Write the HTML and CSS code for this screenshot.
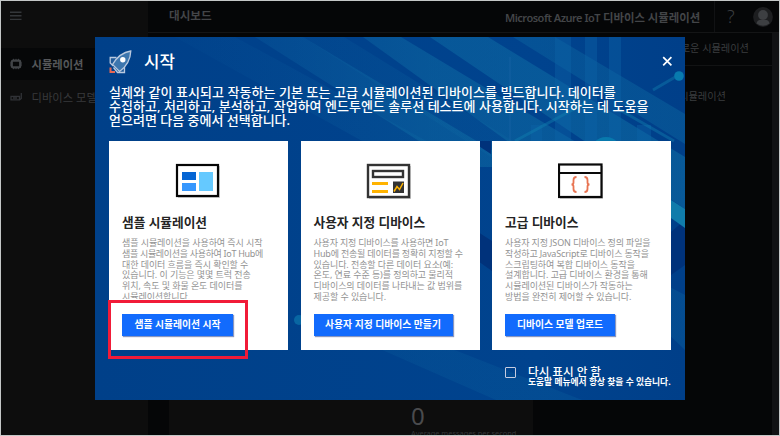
FILE: index.html
```html
<!DOCTYPE html>
<html lang="ko">
<head>
<meta charset="utf-8">
<title>Microsoft Azure IoT 디바이스 시뮬레이션</title>
<link rel="stylesheet" href="styles.css">
</head>
<body>
<div class="app">
  <aside class="sidebar">
    <div class="menu"><svg width="12" height="12" viewBox="0 0 12 12"><path d="M0 2.2h11.500M0 5.800h11.500M0 9.400h11.500" stroke="#34373a" stroke-width="1.400"/></svg></div>
    <nav>
      <a class="nav-item active"><svg width="12" height="12" viewBox="0 0 12 12" fill="none" stroke="#414447"><rect x="1.800" y="2.600" width="8.400" height="6.800" rx="1.200" stroke-width="2.200"/><path d="M3.500.800v2M6 .800v2M8.500.800v2M3.500 9.200v2M6 9.200v2M8.500 9.200v2M0 5h2M0 7h2M10 5h2M10 7h2" stroke-width=".9"/></svg><span>시뮬레이션</span></a>
      <a class="nav-item model"><svg width="12" height="12" viewBox="0 0 12 12" fill="none" stroke="#303236"><path d="M1 5.300h8.500v3.500H1zM11.300 2v5.500L9.500 9M3 7h4" stroke-width="1.300"/></svg><span>디바이스 모델</span></a>
    </nav>
  </aside>
  <div class="main">
    <header class="topbar">
      <h1>대시보드</h1>
      <div class="product"><span class="latin">Microsoft Azure IoT</span> 디바이스 시뮬레이션</div>
      <div class="help">?</div>
      <svg class="avatar" width="20" height="20" viewBox="0 0 20 20"><circle cx="10" cy="10" r="9.900" fill="#1d1e20"/><circle cx="10" cy="8" r="4.900" fill="#3d3f42"/><path d="M3.500 16.500Q4 13 8 12.700h4q4 .3 4.500 3.800Q10 21 3.500 16.500z" fill="#3d3f42"/></svg>
    </header>
    <div class="content">
      <div class="board">
        <div class="toolbar">새로운 시뮬레이션</div>
        <div class="caption">시뮬레이션</div>
        <section class="metric"><div class="value">0</div><div class="label">Average messages per second</div></section>
      </div>
      <div class="scroll"></div>
    </div>
  </div>

  <div class="modal">
    <svg class="pattern" width="590" height="363" viewBox="0 0 590 363">
      <defs>
        <linearGradient id="fade" gradientUnits="userSpaceOnUse" x1="80" x2="590" y1="0" y2="0"><stop offset="0" stop-color="#1068a8" stop-opacity=".1"/><stop offset=".5" stop-color="#1070a6" stop-opacity=".45"/><stop offset="1" stop-color="#0d6aa2" stop-opacity=".6"/></linearGradient>
        <linearGradient id="deep" x1="0" y1="0" x2="1" y2="0"><stop offset="0" stop-color="#004089"/><stop offset=".75" stop-color="#00438e"/><stop offset="1" stop-color="#003f89"/></linearGradient>
      </defs>
      <rect width="590" height="363" fill="url(#deep)"/>
      <g fill="url(#fade)">
        <path d="M80 0h60l230 125h-65z" opacity=".5"/>
        <path d="M160 0h48l217 130h-60z"/>
        <path d="M208 0h41l195 120h-48z" opacity=".4"/>
        <path d="M268 0h38l220 132h-75z"/>
        <path d="M335 0h58l197 120v52z"/>
        <path d="M418 0h42l130 77v30z" opacity=".7"/>
        <path d="M285 312h72l130 51h-86z" opacity=".4"/>
        <path d="M565 245l25 13v55l-25-24z" opacity=".5"/>
      </g>
      <path d="M376 104l20 13v-13zM576 195l14-12v45l-14 10zM383 195l14 9v30l-14-10z" fill="#00327b"/>
      <path d="M460 0h16v104h-16zM490 0h12v104h-12zM514 0h12v104h-12zM436 88h11v16h-11zM542 88h14v16h-14z" fill="#0d65a8" opacity=".4"/>
      <path d="M415 20v84" stroke="#1762a5" stroke-width="2" opacity=".4"/>
      <path d="M420 104l72-39M558 53l24-14M525 73l54 31" stroke="#1284b1" stroke-width="3" fill="none" opacity=".4"/>
      <circle cx="584" cy="39" r="4.800" fill="#087bae"/>
      <circle cx="511" cy="116" r="16" fill="#0879ad"/>
      <path d="M576 163l14 9v19l-14-10z" fill="#107cab"/>
      <circle cx="204" cy="283" r="5" fill="#0c76ad" opacity=".7"/>
    </svg>
    <div class="modal-head">
      <svg class="rocket" width="24" height="26" viewBox="0 0 24 26" fill="none" stroke="#b9c9df"><path d="M7.500 8.500H1.200V14l3 3M15.500 17.500v6h-7l-4-5" stroke-width="1.300" fill="#205a9a"/><path d="M21.800 2C15 3 8.500 7 3.500 15.500l7 7C17.500 17.500 21.500 10 21.800 2z" fill="#3d76ae" stroke-width="1.300"/><circle cx="13.800" cy="10.800" r="2.700" fill="#fff" stroke="none"/><path d="M1.500 18.500V23H6" stroke="#e76854" stroke-width="2"/></svg>
      <h2>시작</h2>
      <svg class="close" width="11" height="11" viewBox="0 0 11 11"><path d="M1.200 1.200l8.200 8.200M9.400 1.200L1.200 9.400" stroke="#fff" stroke-width="1.700"/></svg>
    </div>
    <p class="intro"><span class="i1">실제와 같이 표시되고 작동하는 기본 또는 고급 시뮬레이션된 디바이스를 빌드합니다. 데이터를</span><span class="i2">수집하고, 처리하고, 분석하고, 작업하여 엔드투엔드 솔루션 테스트에 사용합니다. 시작하는 데 도움을</span><span class="i3">얻으려면 다음 중에서 선택합니다.</span></p>
    <div class="cards">
      <article class="card">
        <svg class="art" width="46" height="36" viewBox="0 0 46 36"><path d="M3 3h42v32H3z" fill="#ccc"/><rect x="2" y="2" width="41" height="31" fill="#fff" stroke="#050505" stroke-width="2.200"/><path d="M7 9h14v8H7z" fill="#0565d3"/><path d="M7 20h14v8H7z" fill="#3697fd"/><path d="M24 9h14v19H24z" fill="#65c9ff"/></svg>
        <h3>샘플 시뮬레이션</h3>
        <p class="clipped"><span>샘플 시뮬레이션을 사용하여 즉시 시작</span><span class="t4">샘플 시뮬레이션을 사용하여 IoT Hub에</span><span>대한 데이터 흐름을 즉시 확인할 수</span><span>있습니다. 이 기능은 몇몇 트럭 전송</span><span>위치, 속도 및 화물 온도 데이터를</span><span>시뮬레이션합니다.</span></p>
        <button class="b1">샘플 시뮬레이션 시작</button>
        <div class="highlight"></div>
      </article>
      <article class="card">
        <svg class="art" width="46" height="36" viewBox="0 0 46 36"><path d="M3 3h42v33H3z" fill="#ccc"/><rect x="2" y="2" width="41" height="32" fill="#fff" stroke="#333" stroke-width="2.400"/><rect x="7" y="8" width="30" height="6" fill="#fff" stroke="#333" stroke-width="2.400"/><path d="M6 20.500h16M6 28.500h16" stroke="#ffb300" stroke-width="3"/><path d="M27 18.500h11v11.500H27z" fill="#333"/><path d="M28 28.500l3-5 2.500 3L37 20" fill="none" stroke="#ffb300" stroke-width="1.500"/></svg>
        <h3>사용자 지정 디바이스</h3>
        <p><span class="t2">사용자 지정 디바이스를 사용하면 IoT</span><span class="t2">Hub에 전송될 데이터를 정확히 지정할 수</span><span>있습니다. 전송할 다른 데이터 요소(예:</span><span>온도, 연료 수준 등)를 정의하고 물리적</span><span>디바이스의 데이터를 나타내는 값 범위를</span><span>제공할 수 있습니다.</span></p>
        <button class="b2">사용자 지정 디바이스 만들기</button>
      </article>
      <article class="card">
        <svg class="art" width="46" height="36" viewBox="0 0 46 36"><path d="M2 3h43v33H2z" fill="#ccc"/><rect x="1" y="1.500" width="42.500" height="32.500" fill="#fff" stroke="#090909" stroke-width="2.200"/><path d="M1 10h42" stroke="#090909" stroke-width="2"/><path d="M18.500 14q-3 0-3 3v2.500q0 2-2 2 2 0 2 2V26q0 3 3 3M26.500 14q3 0 3 3v2.500q0 2 2 2-2 0-2 2V26q0 3-3 3" fill="none" stroke="#e87351" stroke-width="1.800"/></svg>
        <h3>고급 디바이스</h3>
        <p><span class="t3">사용자 지정 JSON 디바이스 정의 파일을</span><span class="t3">작성하고 JavaScript로 디바이스 동작을</span><span>스크립팅하여 복합 디바이스 동작을</span><span>설계합니다. 고급 디바이스 환경을 통해</span><span>시뮬레이션된 디바이스가 작동하는</span><span>방법을 완전히 제어할 수 있습니다.</span></p>
        <button class="b3">디바이스 모델 업로드</button>
      </article>
    </div>
    <label class="optout"><i class="box"></i><span class="text"><span class="o1">다시 표시 안 함</span><span class="o2">도움말 메뉴에서 항상 찾을 수 있습니다.</span></span></label>
  </div>
</div>
</body>
</html>
```
FILE: styles.css
```css
* { box-sizing: border-box; }
body { margin: 0; background: #c4c7c7; font-family: "Noto Sans", "Noto Sans CJK KR", sans-serif; }
h1, h2, h3, p { margin: 0; }
svg { display: block; flex: none; }
.app { position: relative; display: flex; width: 780px; height: 436px; border: 1px solid #c4c7c7; background: #050607; overflow: hidden; white-space: nowrap; }
.sidebar { width: 147px; flex: none; background: #0d0d0d; }
.menu { height: 47px; padding: 9px 0 0 9px; }
.nav-item { display: flex; align-items: center; gap: 9.500px; height: 32px; padding-left: 9px; color: #38393b; font-size: 11.300px; }
.nav-item.active { background: #060708; color: #55575a; font-weight: 700; }
.nav-item.model { height: 33px; }
.main { flex: 1; min-width: 0; display: flex; flex-direction: column; }
.topbar { display: flex; align-items: center; height: 32px; border-bottom: 1px solid #141516; padding-left: 21px; color: #434548; }
.topbar h1 { font-size: 11.600px; line-height: 14px; font-weight: 700; width: 336px; padding-bottom: 2px; }
.product { width: 209px; font-size: 11.400px; font-weight: 600; }
.latin { font-size: 11px; letter-spacing: -.5px; }
.help { width: 39px; height: 31px; border-left: 1px solid #111214; padding-left: 12px; font-size: 18px; font-weight: 300; line-height: 31px; color: #3c3e40; }
.content { display: flex; flex: 1; min-height: 0; }
.board { flex: 1; display: flex; flex-direction: column; color: #3b3d3f; font-size: 10.200px; }
.toolbar { height: 33px; border-bottom: 1px solid #121314; padding-right: 23px; line-height: 31px; text-align: right; }
.caption { padding-right: 46px; line-height: 60px; height: 300px; text-align: right; }
.metric { width: 364px; height: 71px; margin-left: 21px; padding: 40px 0 0 242px; background: #0d0d0d; overflow: hidden; }
.value { font-size: 24px; line-height: 24px; color: #4a4b4d; }
.label { font-size: 7.400px; line-height: 8px; margin-top: 1px; color: #343638; }
.scroll { width: 7px; background: #111214; }

.modal { position: absolute; left: 94px; top: 36px; width: 590px; height: 363px; padding: 12px 13px 0 14px; color: #fff; background: #00418c; }
.pattern { position: absolute; left: 0; top: 0; }
.modal-head, .intro, .cards, .optout { position: relative; }
.modal-head { display: flex; height: 26px; align-items: center; }
.modal-head h2 { margin-left: 11px; font-size: 16.800px; line-height: 26px; font-weight: 500; flex: 1; }
.close { margin: -1px -1px 0 0; }
.intro { margin-top: 10px; font-size: 13px; font-weight: 500; line-height: 14px; height: 56px; }
.intro span { display: block; }
.i1 { letter-spacing: .06px; }
.i2 { letter-spacing: .02px; }
.cards { display: grid; grid-template-columns: repeat(3, 179px); gap: 12.500px; }
.card { position: relative; height: 209px; padding: 22px 13px 0; background: #fff; color: #242424; display: flex; flex-direction: column; align-items: flex-start; }
.art { align-self: center; margin-left: -2px; }
h3 { margin-top: 15px; font-size: 12.700px; line-height: 16px; font-weight: 700; }
.card p { margin-top: 8px; height: 65px; font-size: 9px; line-height: 10.800px; letter-spacing: -.07px; color: #929292; }
.card p span { display: block; }
.card .clipped { height: 61px; margin-bottom: 4px; overflow: hidden; }
.card .t2 { letter-spacing: -.19px; }
.card .t3 { letter-spacing: -.15px; }
.card .t4 { letter-spacing: -.32px; }
button { margin: 11px 0 0; padding: 0; height: 22px; border: 0; background: #126bfd; color: #fff; font: 700 9.800px/22px "Noto Sans", "Noto Sans CJK KR", sans-serif; text-align: center; box-shadow: 1px 1px 1px #8796c0; }
.b1 { width: 111px; }
.b2 { width: 139px; }
.b3 { width: 110px; }
.highlight { position: absolute; left: -1px; top: 159px; width: 140px; height: 59px; border: 3px solid #f11b38; }
.optout { display: flex; margin: 16px 0 0 396px; }
.box { width: 11px; height: 11px; margin-top: 1px; border: 1px solid #c5cce0; border-radius: 1px; }
.text { margin-left: 12px; }
.text span { display: block; }
.text .o1 { font-size: 11.600px; font-weight: 500; line-height: 13px; margin-top: -1px; }
.text .o2 { font-size: 8.750px; line-height: 8px; font-weight: 700; }
```
